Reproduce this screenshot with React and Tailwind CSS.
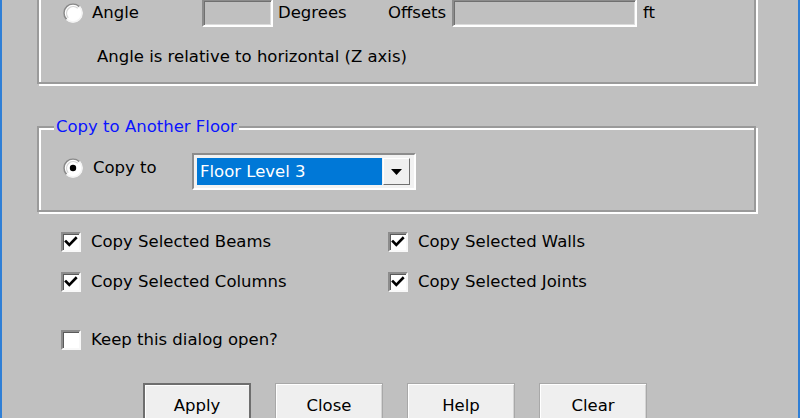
import React from "react";

function Radio({ checked = false }) {
  return (
    <svg width="20" height="20" viewBox="0 0 20 20" className="shrink-0">
      <circle cx="10" cy="10" r="9.5" fill="#fff" />
      <path d="M3.6 16.4 A9 9 0 0 1 16.4 3.6" stroke="#8a8a8a" strokeWidth="1.6" fill="none" />
      <path d="M5.2 14.8 A6.8 6.8 0 0 1 14.8 5.2" stroke="#d6d6d6" strokeWidth="1.2" fill="none" />
      <path d="M16.4 3.6 A9 9 0 0 1 3.6 16.4" stroke="#f4f4f4" strokeWidth="1.6" fill="none" />
      {checked && <circle cx="10" cy="10" r="3.2" fill="#000" />}
    </svg>
  );
}

function Checkbox({ checked = false }) {
  return (
    <div className="h-[20px] w-[20px] shrink-0 border-2 border-t-[#8c8c8c] border-l-[#8c8c8c] border-b-[#f8f8f8] border-r-[#f8f8f8] bg-white shadow-[inset_1px_1px_0_#5a5a5a]">
      {checked && (
        <svg width="16" height="16" viewBox="0 0 16 16">
          <path d="M3 7.5 L6.3 10.8 L12.8 4.2" stroke="#000" strokeWidth="2.6" fill="none" strokeLinecap="square" />
        </svg>
      )}
    </div>
  );
}

function Field({ className = "" }) {
  return (
    <div className={`h-[28px] border-2 border-t-[#8c8c8c] border-l-[#8c8c8c] border-b-white border-r-white bg-[#c0c0c0] shadow-[inset_1px_1px_0_#707070,inset_-1px_-1px_0_#dcdcdc] ${className}`} />
  );
}

function CheckRow({ label, checked }) {
  return (
    <div className="flex h-[20px] items-center gap-[10px]">
      <Checkbox checked={checked} />
      <span>{label}</span>
    </div>
  );
}

function Button({ label, primary }) {
  return (
    <div
      className={`flex h-[46px] w-[108px] items-center justify-center bg-[#efefef] ${
        primary
          ? "border-2 border-[#6e6e6e] shadow-[inset_1px_1px_0_#fff]"
          : "border border-[#a8a8a8] shadow-[inset_1px_1px_0_#fff,inset_-1px_-1px_0_#d4d4d4]"
      }`}
    >
      {label}
    </div>
  );
}

export default function App() {
  return (
    <div className="flex h-[418px] w-[800px] flex-col overflow-hidden border-x-2 border-[#2f7fd6] bg-[#c0c0c0] pl-[35px] font-['DejaVu_Sans',sans-serif] text-[16.5px] leading-[20px] text-black">
      {/* Rotation group (top cut off) */}
      <div className="-mt-[30px] h-[114px] w-[719px] shrink-0 border-2 border-[#9a9a9a] pl-[24px] pt-[27px] shadow-[2px_2px_0_#fff,inset_2px_2px_0_#fff]">
        <div className="flex items-center">
          <div className="flex w-[139px] items-center gap-[9px]">
            <Radio />
            <span>Angle</span>
          </div>
          <Field className="w-[71px]" />
          <span className="ml-[5px] w-[110px]">Degrees</span>
          <span className="w-[64px]">Offsets</span>
          <Field className="w-[185px]" />
          <span className="ml-[6px]">ft</span>
        </div>
        <div className="ml-[34px] mt-[20px]">Angle is relative to horizontal (Z axis)</div>
      </div>

      {/* Copy to another floor */}
      <div className="relative mt-[42px] h-[86px] w-[719px] shrink-0 border-2 border-[#9a9a9a] pl-[24px] pt-[25px] shadow-[2px_2px_0_#fff,inset_2px_2px_0_#fff]">
        <span className="absolute -top-[11px] left-[15px] bg-[#c0c0c0] px-[2px] text-[#0a14ff]">Copy to Another Floor</span>
        <div className="flex items-start">
          <div className="mt-[5px] flex w-[129px] items-center gap-[10px]">
            <Radio checked />
            <span>Copy to</span>
          </div>
          <div className="flex h-[37px] w-[224px] items-start border-2 border-t-[#8c8c8c] border-l-[#8c8c8c] border-b-white border-r-white bg-[#f2f2f2] p-[3px]">
            <div className="flex h-[27px] w-[185px] items-center bg-[#0078d7] pl-[3px] text-white">Floor Level 3</div>
            <div className="ml-[1px] flex h-[27px] w-[27px] items-center justify-center border border-t-white border-l-white border-b-[#707070] border-r-[#707070] bg-[#f0f0f0]">
              <svg width="11" height="6" viewBox="0 0 11 6">
                <path d="M0 0 H11 L5.5 6 Z" fill="#000" />
              </svg>
            </div>
          </div>
        </div>
      </div>

      {/* Options */}
      <div className="ml-[24px] mt-[20px] grid w-[560px] grid-cols-[327px_1fr] gap-y-[20px]">
        <CheckRow label="Copy Selected Beams" checked />
        <CheckRow label="Copy Selected Walls" checked />
        <CheckRow label="Copy Selected Columns" checked />
        <CheckRow label="Copy Selected Joints" checked />
      </div>
      <div className="ml-[24px] mt-[38px]">
        <CheckRow label="Keep this dialog open?" />
      </div>

      {/* Buttons */}
      <div className="ml-[106px] mt-[33px] flex gap-[24px]">
        <Button label="Apply" primary />
        <Button label="Close" />
        <Button label="Help" />
        <Button label="Clear" />
      </div>
    </div>
  );
}
